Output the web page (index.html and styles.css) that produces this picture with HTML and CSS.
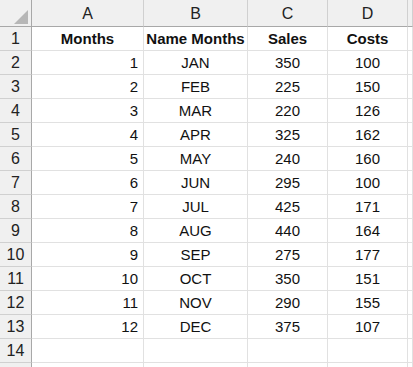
FILE: index.html
```html
<!DOCTYPE html>
<html lang="en">
<head>
    <meta charset="UTF-8">
    <title>Months Sheet</title>
    <link rel="stylesheet" href="styles.css">
</head>
<body>

<div class="sheet">
    <!-- Column headers -->
    <div class="corner"><svg width="14" height="14" viewBox="0 0 14 14"><polygon points="14,0 14,14 0,14" fill="#b7b7b7"/></svg></div>
    <div class="colhead">A</div>
    <div class="colhead">B</div>
    <div class="colhead">C</div>
    <div class="colhead">D</div>
    <div class="colhead last"></div>

    <div class="rowhead">1</div>
    <div class="cell bold">Months</div>
    <div class="cell bold">Name Months</div>
    <div class="cell bold">Sales</div>
    <div class="cell bold">Costs</div>
    <div class="cell"></div>

    <div class="rowhead">2</div><div class="cell num">1</div><div class="cell">JAN</div><div class="cell">350</div><div class="cell">100</div><div class="cell"></div>
    <div class="rowhead">3</div><div class="cell num">2</div><div class="cell">FEB</div><div class="cell">225</div><div class="cell">150</div><div class="cell"></div>
    <div class="rowhead">4</div><div class="cell num">3</div><div class="cell">MAR</div><div class="cell">220</div><div class="cell">126</div><div class="cell"></div>
    <div class="rowhead">5</div><div class="cell num">4</div><div class="cell">APR</div><div class="cell">325</div><div class="cell">162</div><div class="cell"></div>
    <div class="rowhead">6</div><div class="cell num">5</div><div class="cell">MAY</div><div class="cell">240</div><div class="cell">160</div><div class="cell"></div>
    <div class="rowhead">7</div><div class="cell num">6</div><div class="cell">JUN</div><div class="cell">295</div><div class="cell">100</div><div class="cell"></div>
    <div class="rowhead">8</div><div class="cell num">7</div><div class="cell">JUL</div><div class="cell">425</div><div class="cell">171</div><div class="cell"></div>
    <div class="rowhead">9</div><div class="cell num">8</div><div class="cell">AUG</div><div class="cell">440</div><div class="cell">164</div><div class="cell"></div>
    <div class="rowhead">10</div><div class="cell num">9</div><div class="cell">SEP</div><div class="cell">275</div><div class="cell">177</div><div class="cell"></div>
    <div class="rowhead">11</div><div class="cell num">10</div><div class="cell">OCT</div><div class="cell">350</div><div class="cell">151</div><div class="cell"></div>
    <div class="rowhead">12</div><div class="cell num">11</div><div class="cell">NOV</div><div class="cell">290</div><div class="cell">155</div><div class="cell"></div>
    <div class="rowhead">13</div><div class="cell num">12</div><div class="cell">DEC</div><div class="cell">375</div><div class="cell">107</div><div class="cell"></div>
    <div class="rowhead">14</div><div class="cell num"></div><div class="cell"></div><div class="cell"></div><div class="cell"></div><div class="cell"></div>
    <div class="rowhead tail"></div><div class="cell tail"></div><div class="cell tail"></div><div class="cell tail"></div><div class="cell tail"></div><div class="cell tail"></div>
</div>

</body>
</html>
```

FILE: styles.css
```css
body {
    margin: 0;
    background-color: #ffffff;
    font-family: "Liberation Sans", Arial, sans-serif;
    font-size: 15px;
    color: #111;
    overflow: hidden;
}
.sheet {
    display: grid;
    grid-template-columns: 32px 112px 104px 80px 80px 1fr;
    grid-template-rows: 27px repeat(14, 24px) 4px;
}
.sheet > div {
    box-sizing: border-box;
    display: flex;
    align-items: center;
    justify-content: center;
    border-right: 1px solid #e1e1e1;
    border-bottom: 1px solid #e1e1e1;
}
.sheet > .tail {
    border-bottom: none;
}
.corner {
    background-color: #f0f0f0;
    border-right-color: #a8a8a8 !important;
    border-bottom-color: #a8a8a8 !important;
    justify-content: flex-end !important;
    align-items: flex-end !important;
    padding: 0 3px 2px 0;
}
.colhead {
    background-color: #f0f0f0;
    border-right-color: #d0d0d0 !important;
    border-bottom-color: #a8a8a8 !important;
    color: #222;
    font-size: 16px;
    padding-top: 2px;
}
.rowhead {
    background-color: #f0f0f0;
    border-right-color: #a8a8a8 !important;
    border-bottom-color: #d0d0d0 !important;
    color: #222;
    font-size: 16px;
}
.cell.bold {
    font-weight: bold;
}
.cell.num {
    justify-content: flex-end;
    padding-right: 5px;
}
```
